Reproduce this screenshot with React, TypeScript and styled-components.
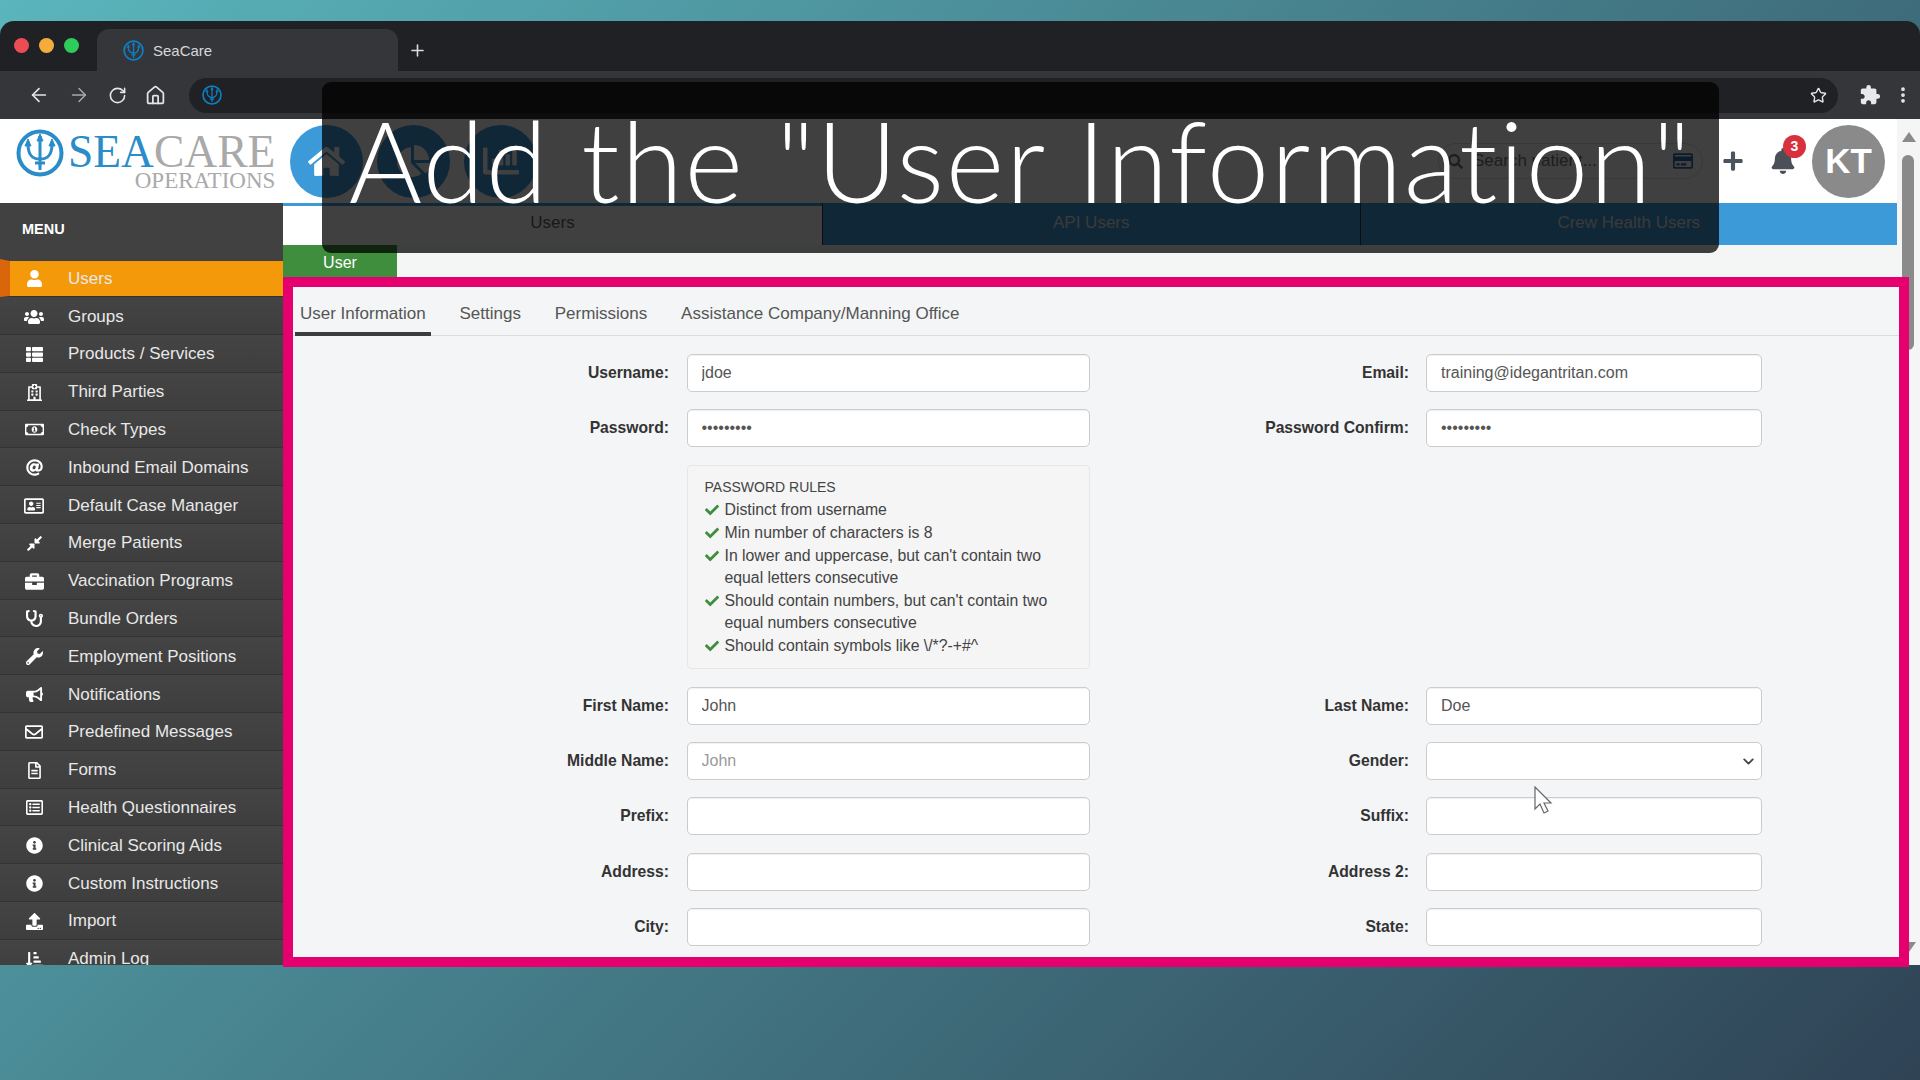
import React from 'react';
import styled, { createGlobalStyle } from 'styled-components';
import { ArrowLeft, ArrowRight, ChevronDown, Home, MoreVertical, Plus, RotateCw, Star } from 'lucide-react';
import { MdExtension } from 'react-icons/md';
import {
  FaAt,
  FaBell,
  FaBriefcase,
  FaBullhorn,
  FaChartBar,
  FaChartPie,
  FaCheck,
  FaCompressAlt,
  FaHome,
  FaInfoCircle,
  FaPlus,
  FaRegAddressCard,
  FaRegCreditCard,
  FaRegEnvelope,
  FaRegFileAlt,
  FaRegHospital,
  FaRegListAlt,
  FaRegMoneyBillAlt,
  FaSearch,
  FaSortAmountDownAlt,
  FaStethoscope,
  FaThList,
  FaUpload,
  FaUser,
  FaUsers,
  FaWrench,
} from 'react-icons/fa';

const menuItems = [
  { label: 'Users', icon: FaUser, active: true },
  { label: 'Groups', icon: FaUsers, size: 20 },
  { label: 'Products / Services', icon: FaThList },
  { label: 'Third Parties', icon: FaRegHospital },
  { label: 'Check Types', icon: FaRegMoneyBillAlt, size: 19 },
  { label: 'Inbound Email Domains', icon: FaAt },
  { label: 'Default Case Manager', icon: FaRegAddressCard, size: 20 },
  { label: 'Merge Patients', icon: FaCompressAlt },
  { label: 'Vaccination Programs', icon: FaBriefcase, size: 19 },
  { label: 'Bundle Orders', icon: FaStethoscope },
  { label: 'Employment Positions', icon: FaWrench },
  { label: 'Notifications', icon: FaBullhorn },
  { label: 'Predefined Messages', icon: FaRegEnvelope, size: 18 },
  { label: 'Forms', icon: FaRegFileAlt },
  { label: 'Health Questionnaires', icon: FaRegListAlt },
  { label: 'Clinical Scoring Aids', icon: FaInfoCircle },
  { label: 'Custom Instructions', icon: FaInfoCircle },
  { label: 'Import', icon: FaUpload },
  { label: 'Admin Log', icon: FaSortAmountDownAlt },
];

const passwordRules = [
  'Distinct from username',
  'Min number of characters is 8',
  "In lower and uppercase, but can't contain two equal letters consecutive",
  "Should contain numbers, but can't contain two equal numbers consecutive",
  'Should contain symbols like \\/*?-+#^',
];

function TridentMark({ size, color }: { size: number; color: string }) {
  return (
    <svg width={size} height={size} viewBox="0 0 48 48" fill="none" stroke={color}>
      <circle cx="24" cy="24" r="21.5" strokeWidth="4" />
      <path d="M24 7v34M19 34h10" strokeWidth="3" />
      <path d="M12 15c0 11 4 15 12 15s12-4 12-15" strokeWidth="3" />
      <path d="M12 10l-3 7h6zM36 10l-3 7h6zM24 5l-3 7h6z" fill={color} strokeWidth="1" />
    </svg>
  );
}

function App() {
  return (
    <Page>
      <GlobalStyle />
      <BrowserWindow>
        <TabStrip>
          <TrafficLights>
            <Light $color="#ec4d55" />
            <Light $color="#f4ad3d" />
            <Light $color="#2ecc5a" />
          </TrafficLights>
          <BrowserTab>
            <TridentMark size={21} color="#0f7fc4" />
            <span>SeaCare</span>
          </BrowserTab>
          <NewTab>
            <Plus size={19} strokeWidth={2} />
          </NewTab>
        </TabStrip>
        <Toolbar>
          <NavIcons>
            <ArrowLeft size={22} strokeWidth={1.8} />
            <DimIcon>
              <ArrowRight size={22} strokeWidth={1.5} />
            </DimIcon>
            <RotateCw size={19} strokeWidth={2} />
            <Home size={21} strokeWidth={2} />
          </NavIcons>
          <AddressBar>
            <TridentMark size={20} color="#0f7fc4" />
            <Star size={17} strokeWidth={2} />
          </AddressBar>
          <ExtensionIcons>
            <MdExtension size={22} />
            <MoreVertical size={20} strokeWidth={2.5} />
          </ExtensionIcons>
        </Toolbar>

        <AppFrame>
          <AppHeader>
            <Logo>
              <TridentMark size={48} color="#2a8cc8" />
              <LogoText>
                <LogoName>
                  <span>SEA</span>
                  <em>CARE</em>
                </LogoName>
                <LogoSub>OPERATIONS</LogoSub>
              </LogoText>
            </Logo>
            <RoundButtons>
              <RoundButton>
                <FaHome size={37} />
              </RoundButton>
              <RoundButton>
                <FaChartPie size={34} />
              </RoundButton>
              <RoundButton>
                <FaChartBar size={36} />
              </RoundButton>
            </RoundButtons>
            <HeaderTools>
              <SearchPill>
                <FaSearch size={15} color="#777" />
                <SearchInput placeholder="Search patient..." readOnly />
                <FaRegCreditCard size={20} color="#2f6ea5" />
              </SearchPill>
              <AddButton>
                <FaPlus size={22} />
              </AddButton>
              <BellButton>
                <FaBell size={26} />
                <Badge>3</Badge>
              </BellButton>
              <Avatar>KT</Avatar>
            </HeaderTools>
          </AppHeader>

          <AppBody>
            <Sidebar>
              <MenuTitle>MENU</MenuTitle>
              {menuItems.map((item) => (
                <MenuItem key={item.label} $active={item.active}>
                  <MenuIcon>
                    <item.icon size={item.size || 17} />
                  </MenuIcon>
                  {item.label}
                </MenuItem>
              ))}
            </Sidebar>

            <Main>
              <TopTabs>
                <TopTab $selected>Users</TopTab>
                <TopTab>API Users</TopTab>
                <TopTab>Crew Health Users</TopTab>
              </TopTabs>
              <UserLabel>User</UserLabel>
              <Panel>
                <FormTabs>
                  <FormTab $selected>User Information</FormTab>
                  <FormTab>Settings</FormTab>
                  <FormTab>Permissions</FormTab>
                  <FormTab>Assistance Company/Manning Office</FormTab>
                </FormTabs>
                <FormGrid>
                  <Field>
                    <FieldLabel>Username:</FieldLabel>
                    <TextInput readOnly value="jdoe" />
                  </Field>
                  <Field>
                    <FieldLabel>Email:</FieldLabel>
                    <TextInput readOnly value="training@idegantritan.com" />
                  </Field>
                  <Field>
                    <FieldLabel>Password:</FieldLabel>
                    <TextInput readOnly type="password" value="123456789" />
                  </Field>
                  <Field>
                    <FieldLabel>Password Confirm:</FieldLabel>
                    <TextInput readOnly type="password" value="123456789" />
                  </Field>
                  <Field>
                    <span />
                    <RulesBox>
                      <RulesTitle>PASSWORD RULES</RulesTitle>
                      {passwordRules.map((rule) => (
                        <Rule key={rule}>
                          <FaCheck size={14} color="#3e8e3e" />
                          <span>{rule}</span>
                        </Rule>
                      ))}
                    </RulesBox>
                  </Field>
                  <span />
                  <Field>
                    <FieldLabel>First Name:</FieldLabel>
                    <TextInput readOnly value="John" />
                  </Field>
                  <Field>
                    <FieldLabel>Last Name:</FieldLabel>
                    <TextInput readOnly value="Doe" />
                  </Field>
                  <Field>
                    <FieldLabel>Middle Name:</FieldLabel>
                    <TextInput readOnly placeholder="John" />
                  </Field>
                  <Field>
                    <FieldLabel>Gender:</FieldLabel>
                    <SelectBox>
                      <ChevronDown size={17} strokeWidth={2.6} />
                    </SelectBox>
                  </Field>
                  <Field>
                    <FieldLabel>Prefix:</FieldLabel>
                    <TextInput readOnly />
                  </Field>
                  <Field>
                    <FieldLabel>Suffix:</FieldLabel>
                    <TextInput readOnly />
                  </Field>
                  <Field>
                    <FieldLabel>Address:</FieldLabel>
                    <TextInput readOnly />
                  </Field>
                  <Field>
                    <FieldLabel>Address 2:</FieldLabel>
                    <TextInput readOnly />
                  </Field>
                  <Field>
                    <FieldLabel>City:</FieldLabel>
                    <TextInput readOnly />
                  </Field>
                  <Field>
                    <FieldLabel>State:</FieldLabel>
                    <TextInput readOnly />
                  </Field>
                </FormGrid>
              </Panel>
            </Main>
            <Scrollbar>
              <ScrollUp />
              <ScrollThumb />
              <ScrollDown />
            </Scrollbar>
          </AppBody>
        </AppFrame>

        <MouseCursor width="20" height="28" viewBox="0 0 20 28">
          <path d="M2 1v22l5-5 4 9 4-2-4-8h7z" fill="#fff" stroke="#666" strokeWidth="1.2" />
        </MouseCursor>
      </BrowserWindow>

      <Caption>
        <CaptionText>Add the "User Information"</CaptionText>
      </Caption>
    </Page>
  );
}

const GlobalStyle = createGlobalStyle`
  html, body {
    margin: 0;
    padding: 0;
  }
  body {
    font-family: "Liberation Sans", Arial, sans-serif;
    overflow: hidden;
  }
  * {
    box-sizing: border-box;
  }
`;

const Page = styled.div`
  position: relative;
  width: 1920px;
  height: 1080px;
  padding-top: 21px;
  overflow: hidden;
  background: linear-gradient(135deg, #5ab5bc 0%, #2f4355 100%);
`;

const BrowserWindow = styled.div`
  position: relative;
  display: flex;
  flex-direction: column;
  width: 100%;
`;

const TabStrip = styled.div`
  display: flex;
  align-items: flex-end;
  height: 50px;
  background: #202124;
  border-radius: 14px 14px 0 0;
`;

const TrafficLights = styled.div`
  display: flex;
  gap: 10px;
  align-self: flex-start;
  width: 97px;
  padding: 17px 0 0 14px;
`;

const Light = styled.i<{ $color: string }>`
  width: 15px;
  height: 15px;
  border-radius: 50%;
  background: ${(p) => p.$color};
`;

const BrowserTab = styled.div`
  display: flex;
  align-items: center;
  gap: 9px;
  width: 301px;
  height: 42px;
  padding: 0 0 0 26px;
  border-radius: 12px 12px 0 0;
  background: #35363a;
  color: #d7d8da;
  font-size: 15px;
`;

const NewTab = styled.div`
  display: flex;
  align-items: center;
  height: 42px;
  padding-left: 10px;
  color: #dcdcdc;
`;

const Toolbar = styled.div`
  display: flex;
  align-items: center;
  height: 48px;
  background: #35363a;
`;

const NavIcons = styled.div`
  display: flex;
  align-items: center;
  gap: 18px;
  width: 189px;
  padding-left: 28px;
  color: #e4e5e7;
`;

const DimIcon = styled.span`
  display: flex;
  color: #a9abae;
`;

const AddressBar = styled.div`
  display: flex;
  align-items: center;
  justify-content: space-between;
  width: 1649px;
  height: 35px;
  padding: 0 11px 0 13px;
  border-radius: 18px;
  background: #202124;
  color: #e4e5e7;
`;

const ExtensionIcons = styled.div`
  display: flex;
  align-items: center;
  gap: 12px;
  padding-left: 21px;
  color: #e8e9ea;
`;

const AppFrame = styled.div`
  display: flex;
  flex-direction: column;
  height: 846px;
  background: #f4f5f5;
`;

const AppHeader = styled.header`
  display: flex;
  align-items: center;
  flex: none;
  height: 84px;
  padding: 0 35px 0 16px;
  background: #fff;
`;

const Logo = styled.div`
  display: flex;
  align-items: flex-start;
  gap: 4px;
  width: 274px;
  height: 66px;
  padding-top: 1px;
`;

const LogoText = styled.div`
  display: flex;
  flex-direction: column;
  align-items: flex-end;
  padding-top: 3px;
  font-family: "Liberation Serif", "Times New Roman", serif;
`;

const LogoName = styled.div`
  height: 38px;
  font-size: 45.5px;
  line-height: 40px;
  color: #2a8cc8;

  em {
    font-style: normal;
    color: #a9a9a9;
  }
`;

const LogoSub = styled.div`
  height: 20px;
  font-size: 23px;
  line-height: 22px;
  color: #aaa;
`;

const RoundButtons = styled.div`
  display: flex;
  gap: 14px;
`;

const RoundButton = styled.div`
  display: flex;
  align-items: center;
  justify-content: center;
  width: 73px;
  height: 73px;
  border-radius: 50%;
  background: #3d9ad9;
  color: #fff;
`;

const HeaderTools = styled.div`
  display: flex;
  align-items: center;
  margin-left: auto;
`;

const SearchPill = styled.div`
  display: flex;
  align-items: center;
  width: 265px;
  height: 36px;
  padding: 0 9px 0 9px;
  border: 1px solid #ddd;
  border-radius: 18px;
`;

const SearchInput = styled.input`
  flex: 1;
  min-width: 0;
  padding: 0 0 0 10px;
  border: 0;
  outline: 0;
  background: transparent;
  font: 17px "Liberation Sans", Arial, sans-serif;

  &::placeholder {
    color: #777;
  }
`;

const AddButton = styled.div`
  display: flex;
  margin-left: 19px;
  color: #4a5560;
`;

const BellButton = styled.div`
  position: relative;
  display: flex;
  margin-left: 26px;
  color: #4b5058;
`;

const Badge = styled.span`
  position: absolute;
  top: -13px;
  right: -10px;
  width: 23px;
  height: 23px;
  border-radius: 50%;
  background: #d9303e;
  color: #fff;
  font-size: 14px;
  font-weight: 700;
  line-height: 23px;
  text-align: center;
`;

const Avatar = styled.div`
  display: flex;
  align-items: center;
  justify-content: center;
  width: 73px;
  height: 73px;
  margin-left: 16px;
  border-radius: 50%;
  background: #8a8a8a;
  color: #fff;
  font-size: 35px;
  font-weight: 700;
`;

const AppBody = styled.div`
  display: flex;
  flex: 1;
  min-height: 0;
`;

const Sidebar = styled.nav`
  flex: none;
  width: 283px;
  height: 762px;
  overflow: hidden;
  background: #414141;
`;

const MenuTitle = styled.div`
  height: 56.4px;
  padding: 19px 0 0 22px;
  color: #fff;
  font-size: 14.5px;
  font-weight: 700;
  line-height: 15px;
`;

const MenuItem = styled.div<{ $active?: boolean }>`
  display: flex;
  align-items: center;
  height: 37.8px;
  padding-top: ${(p) => (p.$active ? '0' : '2px')};
  border-bottom: 1px solid #333;
  border-top: ${(p) => (p.$active ? '2px solid #414141' : '0')};
  border-left: ${(p) => (p.$active ? '10px solid #d9660b' : '0')};
  padding-left: ${(p) => (p.$active ? '0' : '10px')};
  background: ${(p) => (p.$active ? '#f49a0a' : 'linear-gradient(#444, #3e3e3e)')};
  color: #e8e8e8;
  font-size: 17px;
`;

const MenuIcon = styled.span`
  display: flex;
  justify-content: center;
  flex: none;
  width: 48px;
  margin-right: 10px;
  color: #fff;
`;

const Main = styled.main`
  position: relative;
  z-index: 1;
  display: flex;
  flex-direction: column;
  flex: 1;
  min-width: 0;
  padding-right: 23px;
`;

const TopTabs = styled.div`
  display: flex;
  flex: none;
  height: 42px;
  background: #3d9ad9;
`;

const TopTab = styled.div<{ $selected?: boolean }>`
  display: flex;
  align-items: center;
  justify-content: center;
  flex: ${(p) => (p.$selected ? '0 0 540px' : '1')};
  padding-bottom: 2px;
  border-right: 1px solid #2b3a46;
  background: ${(p) => (p.$selected ? '#fff' : 'transparent')};
  box-shadow: ${(p) => (p.$selected ? 'inset 0 3px 0 #3d9ad9' : 'none')};
  color: ${(p) => (p.$selected ? '#666' : '#e6e6e6')};
  font-size: 17px;

  &:last-child {
    border-right: 0;
  }
`;

const UserLabel = styled.div`
  flex: none;
  width: 114px;
  height: 32px;
  background: #3e8e3e;
  color: #fff;
  font-size: 16px;
  line-height: 36px;
  text-align: center;
`;

const Panel = styled.section`
  flex: none;
  height: 690px;
  margin-right: -12px;
  overflow: hidden;
  border: 10px solid #e6006f;
  background: #f4f5f6;
`;

const FormTabs = styled.div`
  display: flex;
  gap: 23.8px;
  height: 49px;
  padding-left: 2px;
  border-bottom: 1px solid #ddd;
`;

const FormTab = styled.div<{ $selected?: boolean }>`
  height: 49px;
  padding: 17px 5px 0;
  border-bottom: 4px solid ${(p) => (p.$selected ? '#3c3c3c' : 'transparent')};
  color: #555;
  font-size: 17px;
`;

const FormGrid = styled.div`
  display: grid;
  grid-template-columns: 797px 672px;
  row-gap: 17.4px;
  margin-top: 18px;
`;

const Field = styled.div`
  display: grid;
  grid-template-columns: 376px 1fr;
  column-gap: 17.5px;
  align-items: start;

  &:nth-child(even) {
    grid-template-columns: 319px 336px;
    column-gap: 17px;
  }
`;

const FieldLabel = styled.label`
  padding-top: 10px;
  color: #333;
  font-size: 15.7px;
  font-weight: 700;
  line-height: 18px;
  text-align: right;
`;

const TextInput = styled.input`
  width: 100%;
  height: 38px;
  padding: 0 14px;
  border: 1px solid #ccc;
  border-radius: 5px;
  outline: 0;
  background: #fff;
  box-shadow: inset 0 1px 1px rgba(0, 0, 0, 0.06);
  color: #555;
  font: 16px "Liberation Sans", Arial, sans-serif;

  &::placeholder {
    color: #999;
  }
`;

const SelectBox = styled.div`
  display: flex;
  align-items: center;
  justify-content: flex-end;
  height: 38px;
  padding: 2px 4px 0 0;
  border: 1px solid #ccc;
  border-radius: 5px;
  background: #fff;
  color: #444;
`;

const RulesBox = styled.div`
  height: 204.4px;
  padding: 10px 14px 0 17px;
  border: 1px solid #e6e6e6;
  border-radius: 4px;
  background: #f5f5f5;
  color: #444;
  font-size: 15.8px;
  line-height: 22.6px;
`;

const RulesTitle = styled.div`
  margin-bottom: 1px;
  font-size: 14px;
`;

const Rule = styled.div`
  display: grid;
  grid-template-columns: 20px 1fr;

  svg {
    margin-top: 4px;
  }
`;

const Scrollbar = styled.div`
  position: absolute;
  top: 98px;
  right: 0;
  width: 23px;
  height: 846px;
  background: #f5f5f5;
`;

const ScrollUp = styled.i`
  position: absolute;
  top: 13px;
  left: 5px;
  border: 7px solid transparent;
  border-top: 0;
  border-bottom: 10px solid #8a8a8a;
`;

const ScrollThumb = styled.i`
  position: absolute;
  top: 36px;
  left: 5px;
  width: 12px;
  height: 195px;
  border-radius: 6px;
  background: #8a8a8a;
`;

const ScrollDown = styled.i`
  position: absolute;
  top: 823px;
  left: 5px;
  border: 7px solid transparent;
  border-bottom: 0;
  border-top: 10px solid #8a8a8a;
`;

const MouseCursor = styled.svg`
  position: absolute;
  top: 765px;
  left: 1533px;
  z-index: 2;
`;

const Caption = styled.div`
  position: absolute;
  top: 82px;
  left: 322px;
  z-index: 3;
  display: flex;
  align-items: center;
  justify-content: center;
  width: 1397px;
  height: 171px;
  padding-bottom: 16px;
  border-radius: 9px;
  background: rgba(0, 0, 0, 0.75);
`;

const CaptionText = styled.div`
  color: #fff;
  font-family: Lato, "Open Sans", sans-serif;
  font-size: 112px;
  font-weight: 300;
  letter-spacing: 1.65px;
  line-height: 1;
  white-space: nowrap;
`;

export default App;
